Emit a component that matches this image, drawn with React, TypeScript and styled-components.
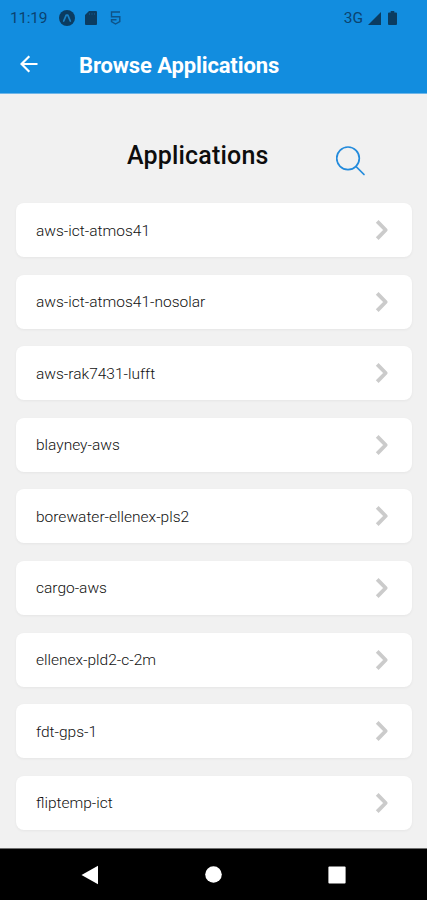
import React from 'react';
import styled, { createGlobalStyle } from 'styled-components';

const GlobalStyle = createGlobalStyle`
  * { box-sizing: border-box; }
  body { margin: 0; background: #f1f1f1; font-family: Roboto, "Liberation Sans", sans-serif; }
`;

const Screen = styled.div`
  width: 427px;
  height: 900px;
  display: flex;
  flex-direction: column;
  overflow: hidden;
  background: #f1f1f1;
`;

const TopArea = styled.div`
  flex: none;
  height: 94px;
  background: #128ddf;
  border-bottom: 1px solid #6fb6e8;
`;

const StatusBar = styled.div`
  height: 36px;
  display: flex;
  align-items: center;
  padding: 0 30px 0 10px;
  color: #0b4370;
`;

const Clock = styled.span`
  width: 49px;
  font-size: 15.5px;
  line-height: 20px;
  font-weight: 400;
  letter-spacing: -0.3px;
`;

const StatusIcon = styled.svg<{ $gap?: number }>`
  flex: none;
  display: block;
  margin-right: ${(p) => p.$gap ?? 0}px;
`;

const Network = styled.span`
  margin-left: auto;
  margin-right: 5px;
  font-size: 15.5px;
  line-height: 20px;
`;

const AppBar = styled.header`
  height: 57px;
  display: flex;
  align-items: center;
  padding-left: 20px;
`;

const IconButton = styled.button`
  flex: none;
  align-self: center;
  display: block;
  padding: 0;
  border: 0;
  background: none;
`;

const SearchButton = styled(IconButton)`
  align-self: start;
`;

const BarTitle = styled.h1`
  margin: 3px 0 0 41px;
  color: #fff;
  font-size: 22px;
  line-height: 26px;
  font-weight: 700;
  letter-spacing: -0.12px;
`;

const Heading = styled.div`
  flex: none;
  height: 109px;
  display: grid;
  grid-template-columns: 127px 209px 30px;
  padding-top: 47px;
`;

const HeadingText = styled.h2`
  grid-column: 2;
  margin: 0;
  color: #0d0d0d;
  font-size: 25px;
  line-height: 30px;
  font-weight: 500;
  letter-spacing: 0.18px;
`;

const List = styled.ul`
  flex: 1;
  min-height: 0;
  margin: 0;
  padding: 0 15px 0 16px;
  list-style: none;
  display: flex;
  flex-direction: column;
  gap: 17.6px;
`;

const Card = styled.li`
  flex: none;
  height: 54px;
  display: flex;
  align-items: center;
  justify-content: space-between;
  padding: 0 23px 0 20px;
  background: #fff;
  border-radius: 8px;
  box-shadow: 0 1px 3px rgba(0, 0, 0, 0.05);
`;

const Name = styled.span`
  padding-top: 1px;
  color: #111;
  font-size: 15.5px;
  line-height: 20px;
  font-weight: 300;
`;

const NavBar = styled.nav`
  flex: none;
  height: 52px;
  border-top: 1px solid #707070;
  background: #000;
  display: flex;
  align-items: center;
  justify-content: space-between;
  padding: 0 81px;
`;

const applications = [
  'aws-ict-atmos41',
  'aws-ict-atmos41-nosolar',
  'aws-rak7431-lufft',
  'blayney-aws',
  'borewater-ellenex-pls2',
  'cargo-aws',
  'ellenex-pld2-c-2m',
  'fdt-gps-1',
  'fliptemp-ict',
];

export default function App() {
  return (
    <Screen>
      <GlobalStyle />
      <TopArea>
        <StatusBar>
          <Clock>11:19</Clock>
          <StatusIcon $gap={10} width="16" height="16" viewBox="0 0 16 16">
            <circle cx="8" cy="8" r="8" fill="#0b3c61" />
            <path d="M4.7 11 7.2 5.2h1.6L11.3 11" fill="none" stroke="#1a80c4" strokeWidth="1.7" strokeLinecap="round" strokeLinejoin="round" />
          </StatusIcon>
          <StatusIcon $gap={13} width="12" height="14" viewBox="0 0 12 14">
            <path d="M4 0H11a1 1 0 0 1 1 1v12a1 1 0 0 1-1 1H1a1 1 0 0 1-1-1V4Z" fill="#0b3c61" />
            <path d="M4.5 2v2M7 2v2M9.5 2v2" stroke="#13568a" strokeWidth="0.8" />
          </StatusIcon>
          <StatusIcon width="11" height="14" viewBox="0 0 11 14" fill="none" stroke="#0f5388" strokeWidth="1.4">
            <path d="M10 1H1.5v4.7H9.8V10.5L5.5 13 1.5 10.5V8.8H6.5" />
          </StatusIcon>
          <Network>3G</Network>
          <StatusIcon $gap={7} width="13" height="13" viewBox="0 0 13 13">
            <path d="M13 0v13H0Z" fill="#0b3c61" />
          </StatusIcon>
          <StatusIcon width="9" height="14" viewBox="0 0 9 14">
            <path d="M2.7 0h3.6v1.5H8a1 1 0 0 1 1 1V13a1 1 0 0 1-1 1H1a1 1 0 0 1-1-1V2.5a1 1 0 0 1 1-1h1.7Z" fill="#0b3c61" />
          </StatusIcon>
        </StatusBar>
        <AppBar>
          <IconButton aria-label="Back">
            <StatusIcon width="18" height="20" viewBox="0 0 18 20" fill="none" stroke="#fff" strokeWidth="2.2">
              <path d="M17.5 9H2M9.3 1.2 1.5 9l7.8 7.8" />
            </StatusIcon>
          </IconButton>
          <BarTitle>Browse Applications</BarTitle>
        </AppBar>
      </TopArea>
      <Heading>
        <HeadingText>Applications</HeadingText>
        <SearchButton aria-label="Search">
          <StatusIcon width="30" height="36" viewBox="0 0 30 36" fill="none" stroke="#238bdc" strokeWidth="1.7" strokeLinecap="round">
            <circle cx="12" cy="17.3" r="11.3" />
            <path d="m20 25.5 8 8" />
          </StatusIcon>
        </SearchButton>
      </Heading>
      <List>
        {applications.map((name) => (
          <Card key={name}>
            <Name>{name}</Name>
            <StatusIcon width="14" height="22" viewBox="0 0 14 22" fill="none" stroke="#cbcbcb" strokeWidth="3.8" strokeLinejoin="round">
              <path d="m2.2 2.3 8.5 8.7-8.5 8.7" />
            </StatusIcon>
          </Card>
        ))}
      </List>
      <NavBar>
        <StatusIcon width="17" height="20" viewBox="0 0 17 20"><path d="M17 .7v18.6L.5 10Z" fill="#fff" /></StatusIcon>
        <StatusIcon width="17" height="17" viewBox="0 0 17 17"><circle cx="8.5" cy="8.5" r="8.3" fill="#fff" /></StatusIcon>
        <StatusIcon width="18" height="18" viewBox="0 0 18 18"><rect x=".4" y=".4" width="17.2" height="17.2" rx="1" fill="#fff" /></StatusIcon>
      </NavBar>
    </Screen>
  );
}
